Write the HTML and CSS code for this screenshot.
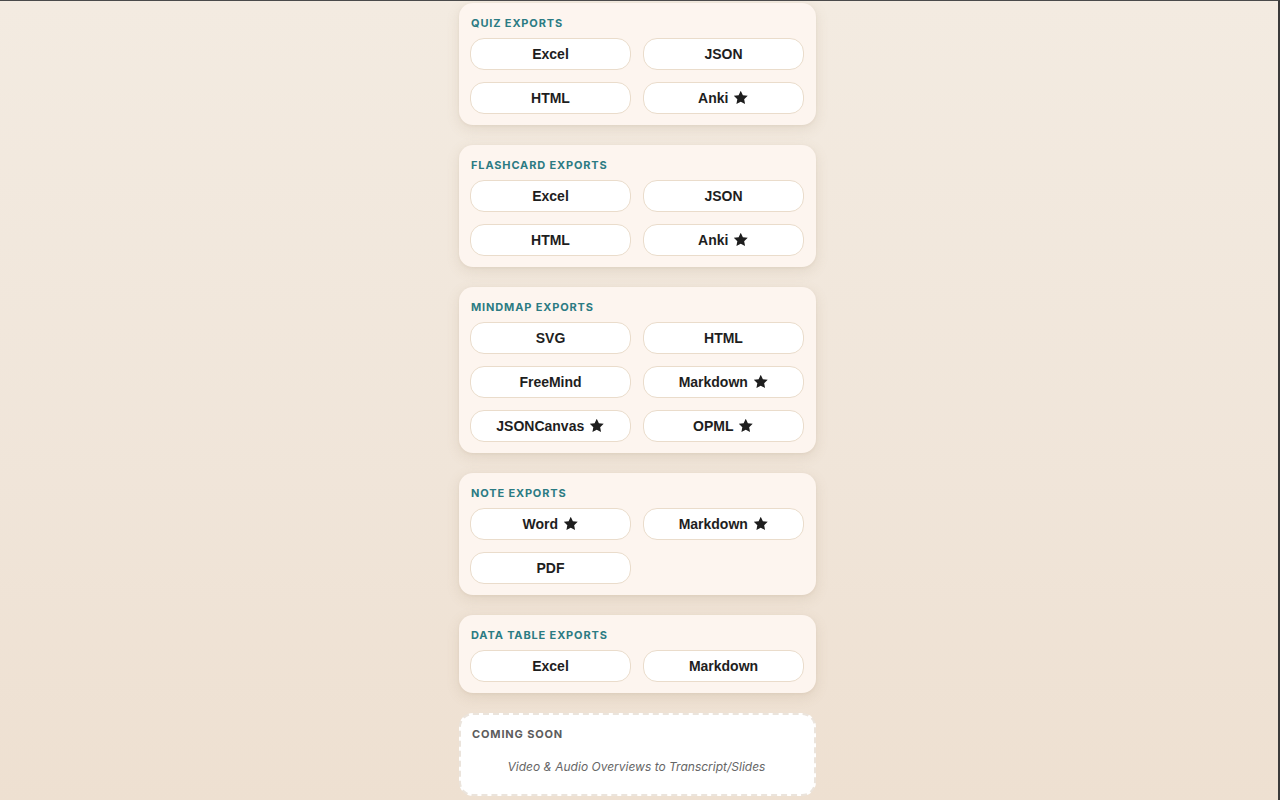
FILE: index.html
```html
<!DOCTYPE html>
<html lang="en">
<head>
<meta charset="utf-8">
<title>Exports</title>
<link rel="stylesheet" href="styles.css">
</head>
<body>
<svg width="0" height="0" class="defs" aria-hidden="true">
  <symbol id="star" viewBox="0 0 24 24"><path d="M12 1.2l3.3 6.8 7.5 1-5.5 5.2 1.4 7.5L12 18.1l-6.7 3.6 1.4-7.5L1.2 9l7.5-1z"/></symbol>
</svg>
<main class="column">
  <section class="card">
    <h2 class="card-title">Quiz Exports</h2>
    <div class="grid">
      <button class="btn">Excel</button>
      <button class="btn">JSON</button>
      <button class="btn">HTML</button>
      <button class="btn">Anki <svg class="star"><use href="#star"/></svg></button>
    </div>
  </section>
  <section class="card">
    <h2 class="card-title">Flashcard Exports</h2>
    <div class="grid">
      <button class="btn">Excel</button>
      <button class="btn">JSON</button>
      <button class="btn">HTML</button>
      <button class="btn">Anki <svg class="star"><use href="#star"/></svg></button>
    </div>
  </section>
  <section class="card">
    <h2 class="card-title">Mindmap Exports</h2>
    <div class="grid">
      <button class="btn">SVG</button>
      <button class="btn">HTML</button>
      <button class="btn">FreeMind</button>
      <button class="btn">Markdown <svg class="star"><use href="#star"/></svg></button>
      <button class="btn">JSONCanvas <svg class="star"><use href="#star"/></svg></button>
      <button class="btn">OPML <svg class="star"><use href="#star"/></svg></button>
    </div>
  </section>
  <section class="card">
    <h2 class="card-title">Note Exports</h2>
    <div class="grid">
      <button class="btn">Word <svg class="star"><use href="#star"/></svg></button>
      <button class="btn">Markdown <svg class="star"><use href="#star"/></svg></button>
      <button class="btn">PDF</button>
    </div>
  </section>
  <section class="card">
    <h2 class="card-title">Data Table Exports</h2>
    <div class="grid">
      <button class="btn">Excel</button>
      <button class="btn">Markdown</button>
    </div>
  </section>
  <section class="soon">
    <h2 class="card-title soon-title">Coming Soon</h2>
    <p class="soon-text">Video &amp; Audio Overviews to Transcript/Slides</p>
  </section>
</main>
</body>
</html>
```
FILE: styles.css
```css
html {
  height: 100%;
  border-top: 1px solid #4a4a4a;
  border-right: 2px solid #3a3a3a;
  box-sizing: border-box;
  background: linear-gradient(180deg, #f3ebe1 0%, #f0e5d9 60%, #eee0d1 100%);
  overflow: hidden;
}
body {
  margin: 0;
  padding: 2px 3px 0 0;
  font-family: "Liberation Sans", Arial, sans-serif;
}
.defs { position: absolute; }
.column {
  width: 357px;
  margin: 0 auto;
  display: flex;
  flex-direction: column;
  gap: 20px;
}
.card {
  background: #fdf5ef;
  border-radius: 14px;
  padding: 13px 12px 11px 11px;
  box-shadow: 0 4px 14px rgba(140, 110, 80, 0.14), 0 1px 3px rgba(140, 110, 80, 0.08);
}
.card-title {
  margin: 0 0 7px 1px;
  font-family: Inter, "Noto Sans", sans-serif;
  font-size: 11px;
  line-height: 15px;
  font-weight: 700;
  letter-spacing: 0.85px;
  text-transform: uppercase;
  color: #2b7b83;
}
.grid {
  display: grid;
  grid-template-columns: 1fr 1fr;
  gap: 12px;
}
.btn {
  height: 32px;
  background: #fff;
  border: 1px solid #eadccb;
  border-radius: 14px;
  font-family: "Liberation Sans", Arial, sans-serif;
  font-weight: 700;
  font-size: 14px;
  color: #1e1e1e;
  display: flex;
  align-items: center;
  justify-content: center;
  gap: 5px;
  padding: 0;
}
.star {
  width: 15.5px;
  height: 15.5px;
  fill: #1e1e1e;
}
.soon {
  background: #fff;
  border: 2px dashed #ebe4dc;
  border-radius: 14px;
  padding: 12px 12px 12px 10px;
}
.soon-title {
  margin: 0 0 0 1px;
  color: #5c5c5c;
}
.soon-text {
  margin: 0;
  padding: 16px 0 6px;
  text-align: center;
  font-family: Inter, "Noto Sans", sans-serif;
  font-style: italic;
  font-size: 12px;
  line-height: 18px;
  color: #666;
}
```
